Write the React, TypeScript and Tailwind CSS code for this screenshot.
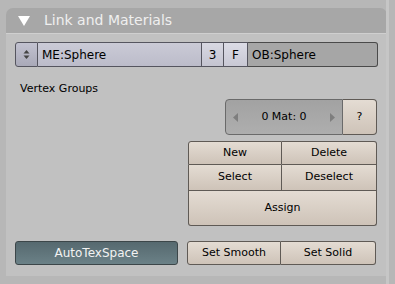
import React from 'react';

const font = { fontFamily: '"DejaVu Sans", Verdana, sans-serif' };

function Beige({ children, className = '' }: { children: React.ReactNode; className?: string }) {
  return (
    <div
      className={`flex items-center justify-center bg-gradient-to-b from-[#e4dcd3] to-[#cec3b8] border border-[#5f5a55] text-[11px] text-black ${className}`}
    >
      {children}
    </div>
  );
}

export default function App() {
  return (
    <div className="w-[395px] h-[284px] bg-[#b7b7b7] overflow-hidden relative" style={font}>
      <div className="absolute left-[386px] top-0 w-[3px] h-full bg-[#c6c6c6]" />
      <div className="ml-[6px] pt-[8px] w-[381px]">
        {/* header */}
        <div className="h-[25px] bg-[#a7a7a7] rounded-t-[7px] flex items-center pl-[12px] gap-[14px]">
          <svg width="12" height="10" viewBox="0 0 12 10">
            <path d="M0 0 L12 0 L6 10 Z" fill="#ffffff" />
          </svg>
          <span className="text-[14px] text-[#efefef]">Link and Materials</span>
        </div>

        {/* body */}
        <div className="h-[243px] bg-[#c1c1c1] border-t border-[#cfcfcf] flex flex-col pl-[9px] pr-[9px]">
          {/* row 1 */}
          <div className="mt-[8px] h-[25px] flex text-[12px] text-black">
            <div className="w-[23px] flex items-center justify-center bg-gradient-to-b from-[#c2c2d0] to-[#a9a9b8] border border-[#55555f] rounded-l-[3px]">
              <svg width="7" height="11" viewBox="0 0 7 11">
                <path d="M0.5 4.5 L3.5 1 L6.5 4.5 Z" fill="#444" />
                <path d="M0.5 6.5 L3.5 10 L6.5 6.5 Z" fill="#444" />
              </svg>
            </div>
            <div className="w-[164px] flex items-center pl-[4px] bg-gradient-to-b from-[#cacad6] to-[#bcbcca] border-y border-r border-[#55555f]">
              ME:Sphere
            </div>
            <div className="w-[22px] flex items-center justify-center bg-gradient-to-b from-[#d8d8e2] to-[#c4c4d0] border-y border-r border-[#55555f]">
              3
            </div>
            <div className="w-[24px] flex items-center justify-center bg-gradient-to-b from-[#dcdce6] to-[#c8c8d4] border-y border-r border-[#55555f]">
              F
            </div>
            <div className="w-[130px] flex items-center pl-[4px] bg-[#a6a6a6] border-y border-r border-[#4a4a4a] rounded-r-[3px]">
              OB:Sphere
            </div>
          </div>

          <div className="mt-[15px] pl-[5px] text-[11px] leading-[14px] text-black">Vertex Groups</div>

          {/* mat row */}
          <div className="mt-[3px] self-end mr-[1px] w-[152px] h-[36px] flex text-[11px] text-black">
            <div className="flex-1 flex items-center justify-between px-[7px] bg-gradient-to-b from-[#a2a2a2] to-[#aeaeae] border border-[#6a6a6a] rounded-l-[4px]">
              <svg width="5" height="9" viewBox="0 0 5 9">
                <path d="M5 0 L0 4.5 L5 9 Z" fill="#7e7e7e" />
              </svg>
              <span>0 Mat: 0</span>
              <svg width="5" height="9" viewBox="0 0 5 9">
                <path d="M0 0 L5 4.5 L0 9 Z" fill="#7e7e7e" />
              </svg>
            </div>
            <Beige className="w-[34px] border-l-0 rounded-r-[4px]">?</Beige>
          </div>

          {/* vertex group buttons */}
          <div className="mt-[6px] self-end mr-[1px] w-[189px] flex flex-col">
            <div className="flex h-[24px]">
              <Beige className="w-[94px] rounded-tl-[3px]">New</Beige>
              <Beige className="flex-1 border-l-0 rounded-tr-[3px]">Delete</Beige>
            </div>
            <div className="flex h-[26px]">
              <Beige className="w-[94px] border-t-0">Select</Beige>
              <Beige className="flex-1 border-l-0 border-t-0">Deselect</Beige>
            </div>
            <Beige className="h-[35px] border-t-0 rounded-b-[3px]">Assign</Beige>
          </div>

          {/* bottom row */}
          <div className="mt-[15px] h-[24px] flex">
            <div className="w-[163px] flex items-center justify-center bg-gradient-to-b from-[#56696f] to-[#6b8187] border border-[#3c4649] rounded-[3px] text-[12px] text-[#f2f2f2]">
              AutoTexSpace
            </div>
            <div className="ml-[9px] flex w-[189px]">
              <Beige className="w-[94px] rounded-l-[3px]">Set Smooth</Beige>
              <Beige className="flex-1 border-l-0 rounded-r-[3px]">Set Solid</Beige>
            </div>
          </div>
        </div>
      </div>
    </div>
  );
}
